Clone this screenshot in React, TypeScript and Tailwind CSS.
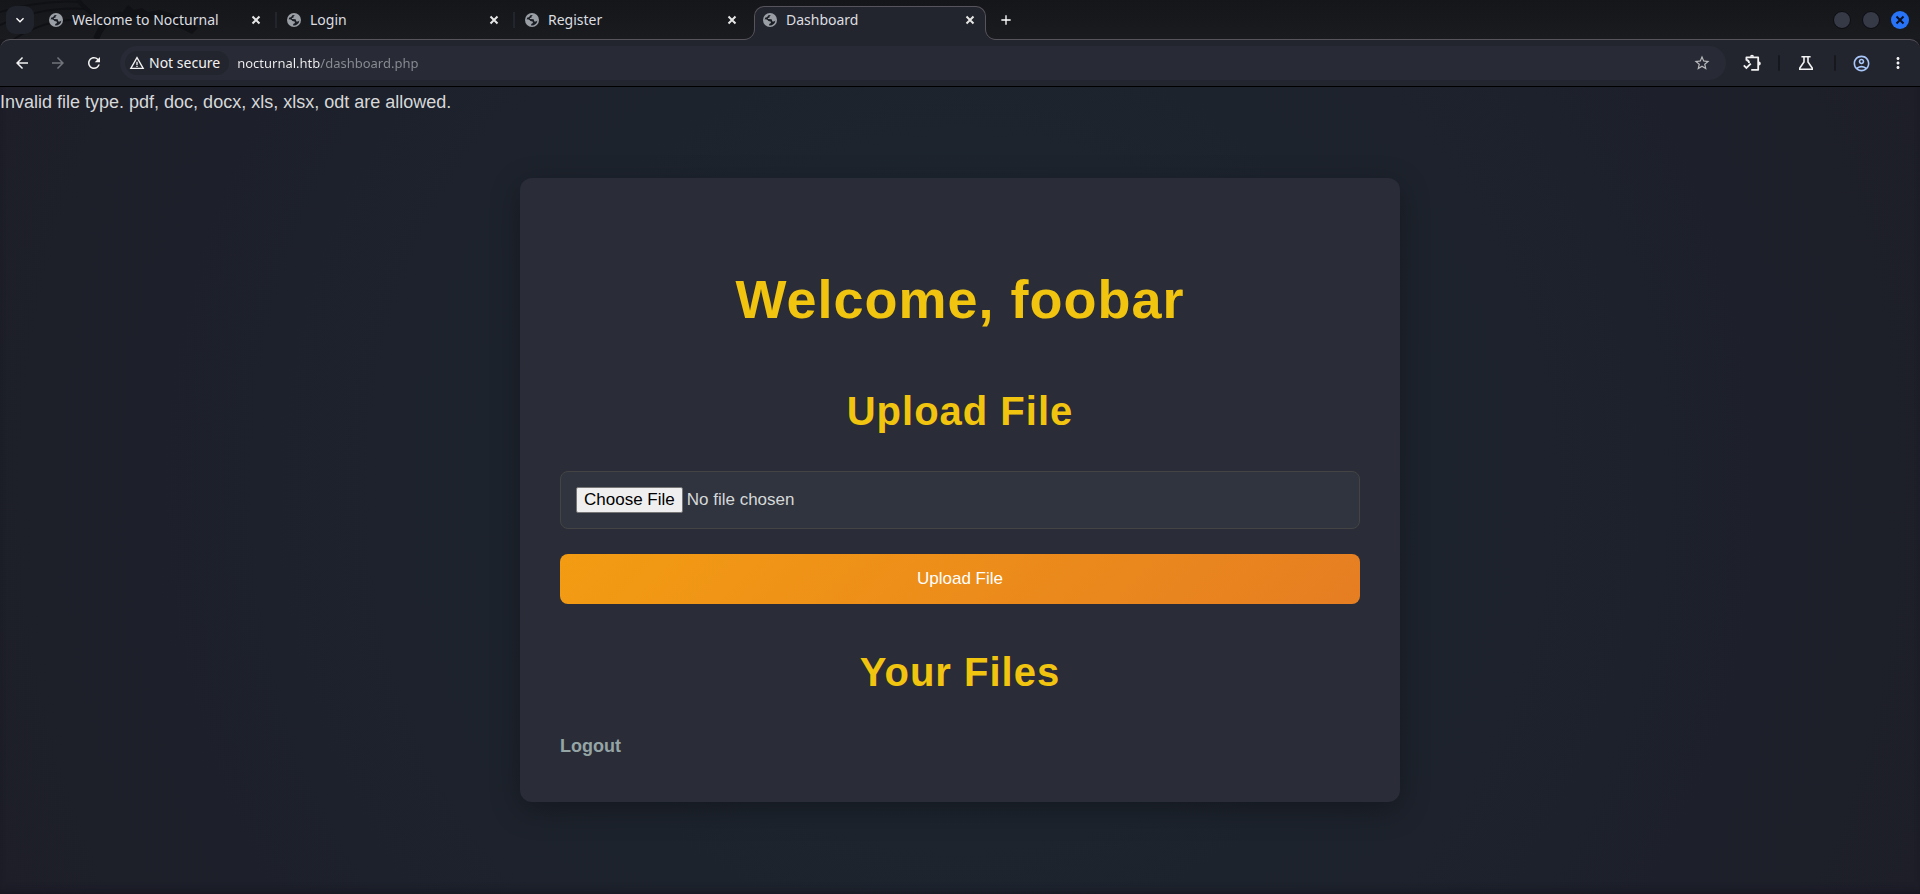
import React from "react";
import {
  MdAdd,
  MdArrowBack,
  MdArrowForward,
  MdKeyboardArrowDown,
  MdMoreVert,
  MdOutlineAccountCircle,
  MdRefresh,
  MdStarBorder,
  MdWarningAmber,
} from "react-icons/md";

function Globe() {
  return (
    <svg viewBox="0 0 14 14" className="size-[14px] shrink-0" aria-hidden="true">
      <circle cx="7" cy="7" r="7" fill="#9a9ea5" />
      <path
        d="M7.9 1.9 L6.6 3.2 L6.6 4.4 L5 5 L4.8 6 L8.6 6.2 L9.4 8.4 L11 8.6 L12.4 7.4 A5.5 5.5 0 0 1 6.2 12.4 L6.2 11 L8 10 L7.6 8.4 L5.4 8 L4.6 7 L3 6.2 L1.6 6.4 L2.4 4.6 L4 4.2 L5.4 2.2 Z"
        fill="#1b1d25"
      />
      <path d="M8.2 2.6 L10.6 3.4 L12 6 L10.6 7.2 L9.8 5.4 L7.6 4.6 Z" fill="#9a9ea5" />
    </svg>
  );
}

function Cross() {
  return (
    <svg viewBox="0 0 14 14" className="size-[14px]" fill="none" stroke="currentColor" strokeWidth="2" aria-hidden="true">
      <path d="M3.5 3.5 L10.5 10.5 M10.5 3.5 L3.5 10.5" />
    </svg>
  );
}

function TabFoot({ side }: { side: "left" | "right" }) {
  return (
    <svg
      viewBox="0 0 12 11"
      aria-hidden="true"
      className={
        side === "left"
          ? "absolute bottom-0 -left-[11px] h-[11px] w-3"
          : "absolute -right-[11px] bottom-0 h-[11px] w-3 -scale-x-100"
      }
    >
      <path d="M0 10.5 C6 10.5 10.5 6 10.5 0 L12 0 L12 11 L0 11 Z" fill="#23252e" />
      <path d="M0 10.5 C6 10.5 10.5 6 10.5 0" fill="none" stroke="#57545c" />
    </svg>
  );
}

function Tab({ title, active, divider }: { title: string; active?: boolean; divider?: boolean }) {
  return (
    <div
      className={
        active
          ? "relative z-10 -mb-px flex h-[34px] w-[232px] items-center rounded-t-[10px] border border-b-0 border-[#57545c] bg-[#23252e] pr-2 pb-[7px] pl-2"
          : "relative -mb-px flex h-[34px] w-[238px] items-center pr-px pb-[6px] pl-[9px]"
      }
    >
      {active && <TabFoot side="left" />}
      <Globe />
      <span className="ml-[9px] flex-1 text-[14px] leading-5 text-[#dcdee0]">{title}</span>
      <button aria-label={`Close ${title}`} className="text-[#e6e6e6]">
        <Cross />
      </button>
      {!active && <span className={divider ? "ml-3 h-4 w-[2px] bg-[#23252e]" : "ml-3 w-[2px]"} />}
      {active && <TabFoot side="right" />}
    </div>
  );
}

function Wallpaper() {
  return (
    <svg viewBox="0 0 220 39" className="absolute top-0 left-0 h-[39px] w-[220px]" aria-hidden="true">
      <g fill="none" stroke="#101115">
        <path d="M0 12 C30 3 56 0 82 2" strokeWidth="2" />
        <path d="M0 25 C28 12 56 7 88 9" strokeWidth="2" />
        <path d="M14 39 C40 23 66 17 92 21" strokeWidth="2" />
        <path d="M78 0 C84 8 92 14 100 20" strokeWidth="4" />
        <path d="M122 14 C104 20 100 30 96 39" strokeWidth="6" />
      </g>
      <path d="M128 5 L134 10 L142 8 L148 12 L160 10 C176 14 188 22 198 28 L192 34 C170 22 146 16 118 18 Z" fill="#101115" />
    </svg>
  );
}

function ExtensionIcon() {
  return (
    <svg viewBox="0 0 18 18" className="size-[18px]" fill="none" stroke="currentColor" strokeWidth="1.8" aria-hidden="true">
      <path d="M3.4 6.4 V3.4 H15.2 V15.8 H8.2" strokeLinejoin="round" />
      <path d="M3.4 6 C5.4 6.4 6.2 7.4 6 9.2" />
      <path d="M0.8 11.4 L3.4 14 L7.8 9.6" />
      <path d="M7 2.8 A2 2 0 0 1 11 2.8 Z M15.8 7.6 A2 2 0 0 1 15.8 11.6 Z" fill="currentColor" stroke="none" />
    </svg>
  );
}

function FlaskIcon() {
  return (
    <svg viewBox="0 0 16 16" className="size-4" fill="none" stroke="currentColor" strokeWidth="1.6" aria-hidden="true">
      <path d="M3.4 1.8 H12.6 M6 1.8 V7 L1.8 13 V14.2 H14.2 V13 L10 7 V1.8" />
    </svg>
  );
}

function Divider() {
  return <span className="h-4 w-[2px] rounded-full bg-[#17181e]" />;
}

function TitleBar() {
  return (
    <div className="relative flex h-[39px] items-end bg-linear-to-b from-[#15161a] to-[#1a1b1f] pl-[6px]">
      <Wallpaper />
      <button
        aria-label="Search tabs"
        className="relative mr-[6px] mb-[5px] flex size-7 items-center justify-center rounded-[9px] bg-[#20232c] text-white"
      >
        <MdKeyboardArrowDown size={16} stroke="currentColor" />
      </button>
      <Tab title="Welcome to Nocturnal" divider />
      <Tab title="Login" divider />
      <Tab title="Register" />
      <Tab title="Dashboard" active />
      <button aria-label="New tab" className="mb-[11px] ml-3 text-white">
        <MdAdd size={16} />
      </button>
      <div className="mr-[11px] mb-[10px] ml-auto flex gap-[11px]">
        <button aria-label="Minimize" className="size-[18px] rounded-full border border-[#0c0d10] bg-[#363a47]" />
        <button aria-label="Maximize" className="size-[18px] rounded-full border border-[#0c0d10] bg-[#363a47]" />
        <button
          aria-label="Close window"
          className="flex size-[18px] items-center justify-center rounded-full bg-[#2874f8] text-[#0c1020]"
        >
          <Cross />
        </button>
      </div>
    </div>
  );
}

function Toolbar() {
  return (
    <div className="h-12 bg-[#17181d]">
      <div className="flex h-12 items-center rounded-t-[10px] border-t border-b border-t-[#57545c] border-b-black bg-[#23252e] pl-[13px] text-[#f2f2f2]">
        <button aria-label="Back">
          <MdArrowBack size={18} />
        </button>
        <button aria-label="Forward" className="ml-[18px] text-[#72747b]">
          <MdArrowForward size={18} />
        </button>
        <button aria-label="Reload" className="ml-[18px]">
          <MdRefresh size={18} />
        </button>
        <div className="ml-[17px] flex h-[34px] flex-1 items-center rounded-full bg-[#282a35] pr-[15px] pl-[5px]">
          <button className="flex h-6 items-center gap-1 rounded-full bg-[#23252e] pr-[9px] pl-1 text-[14px] leading-5">
            <MdWarningAmber size={16} />
            Not secure
          </button>
          <input
            type="text"
            aria-label="Address"
            defaultValue="nocturnal.htb/dashboard.php"
            className="ml-2 min-w-0 flex-1 bg-[linear-gradient(90deg,#f2f2f2_83px,#8b8d94_83px)] bg-clip-text text-[13px] leading-5 text-transparent caret-white outline-none"
          />
          <button aria-label="Bookmark this page" className="text-[#b9babd]">
            <MdStarBorder size={18} />
          </button>
        </div>
        <div className="mr-[13px] ml-[17px] flex items-center">
          <button aria-label="Extensions" className="mr-[17px]">
            <ExtensionIcon />
          </button>
          <Divider />
          <button aria-label="Labs" className="mr-5 ml-[18px]">
            <FlaskIcon />
          </button>
          <Divider />
          <button aria-label="Profile" className="ml-4 text-[#a8c7fa]">
            <MdOutlineAccountCircle size={19} />
          </button>
          <button aria-label="Menu" className="ml-[18px]">
            <MdMoreVert size={18} />
          </button>
        </div>
      </div>
    </div>
  );
}

export default function App() {
  return (
    <div className="flex min-h-screen flex-col bg-[#17181d] font-['Noto_Sans',sans-serif]">
      <header>
        <TitleBar />
        <Toolbar />
      </header>
      <main className="flex-1 bg-[radial-gradient(circle,#1d2731,#1d1e28)] pb-10 font-['Liberation_Sans',Arial,sans-serif] text-[18px] leading-[30px] text-[#d6d8d9] shadow-[inset_0_-6px_8px_-4px_rgba(20,20,28,0.7)]">
        <p>Invalid file type. pdf, doc, docx, xls, xlsx, odt are allowed.</p>
        <section className="mx-auto mt-[61px] w-full max-w-[880px] rounded-xl bg-[#2a2c37] p-10 shadow-[0_8px_30px_rgba(0,0,0,0.3)]">
          <h1 className="mt-[41px] text-center text-[54px] leading-[80px] font-bold tracking-[1px] text-[#f1c40f]">
            Welcome, foobar
          </h1>
          <h2 className="mt-[42px] text-center text-[40px] leading-[60px] font-bold tracking-[1px] text-[#f1c40f]">
            Upload File
          </h2>
          <form>
            <input
              type="file"
              aria-label="File to upload"
              className="mt-[30px] block h-[58px] w-full rounded-lg border border-[#444] bg-[#2f343e] p-[15px] text-[17px] leading-normal file:rounded-[2px] file:border file:border-[#767676] file:bg-[#efefef] file:px-[7px] file:py-[2px] file:leading-5 file:text-black"
            />
            <button
              type="button"
              className="mt-[25px] block h-[50px] w-full rounded-lg bg-[linear-gradient(135deg,#f39c12,#e67e22)] text-[17px] text-white"
            >
              Upload File
            </button>
          </form>
          <h2 className="mt-[38px] text-center text-[40px] leading-[60px] font-bold tracking-[1px] text-[#f1c40f]">
            Your Files
          </h2>
          <a href="#logout" className="mt-7 block w-fit leading-8 font-bold text-[#95a5a6]">
            Logout
          </a>
        </section>
      </main>
    </div>
  );
}
